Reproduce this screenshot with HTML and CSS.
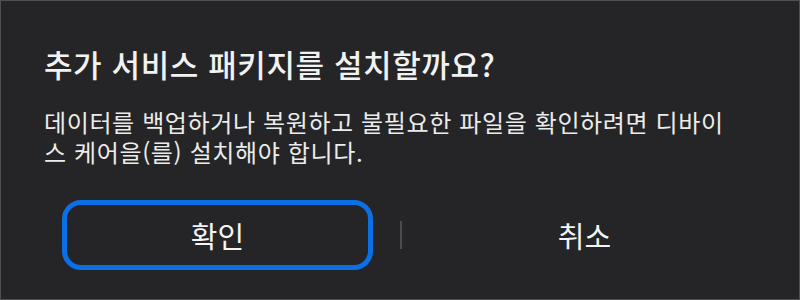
FILE: index.html
```html
<!DOCTYPE html>
<html lang="ko">
<head>
<meta charset="utf-8">
<link rel="stylesheet" href="styles.css">
</head>
<body>
<div class="dialog">
  <h1 class="title">추가 서비스 패키지를 설치할까요?</h1>
  <p class="message">데이터를 백업하거나 복원하고 불필요한 파일을 확인하려면 디바이<br>스 케어을(를) 설치해야 합니다.</p>
  <div class="actions">
    <button class="btn btn-focused">확인</button>
    <span class="divider"></span>
    <button class="btn">취소</button>
  </div>
</div>
</body>
</html>
```
FILE: styles.css
```css
html, body {
  margin: 0;
  padding: 0;
  background: #252527;
}
.dialog {
  box-sizing: border-box;
  width: 800px;
  height: 300px;
  border: 1px solid #505052;
  background: #252527;
  color: #f2f2f2;
  font-family: "Noto Sans CJK KR", "Noto Sans", sans-serif;
  padding: 43px 0 0 43px;
}
.title {
  margin: 0;
  font-size: 31px;
  font-weight: 500;
  line-height: 40px;
  letter-spacing: 0.6px;
}
.message {
  margin: 23px 0 0 0;
  font-size: 24px;
  font-weight: 400;
  line-height: 30px;
  letter-spacing: 0.62px;
  color: #ececec;
}
.actions {
  display: flex;
  align-items: center;
  margin-top: 33px;
  padding-left: 18px;
  gap: 27px;
}
.btn {
  box-sizing: border-box;
  width: 311px;
  height: 70px;
  background: transparent;
  border: 5px solid transparent;
  border-radius: 19px;
  color: #f4f4f4;
  font-family: "Noto Sans CJK KR", "Noto Sans", sans-serif;
  font-size: 29px;
  letter-spacing: 0;
  padding: 0;
}
.btn-focused {
  border-color: #0b6fe6;
}
.divider {
  width: 2px;
  height: 28px;
  background: #4c4c4e;
}
```
